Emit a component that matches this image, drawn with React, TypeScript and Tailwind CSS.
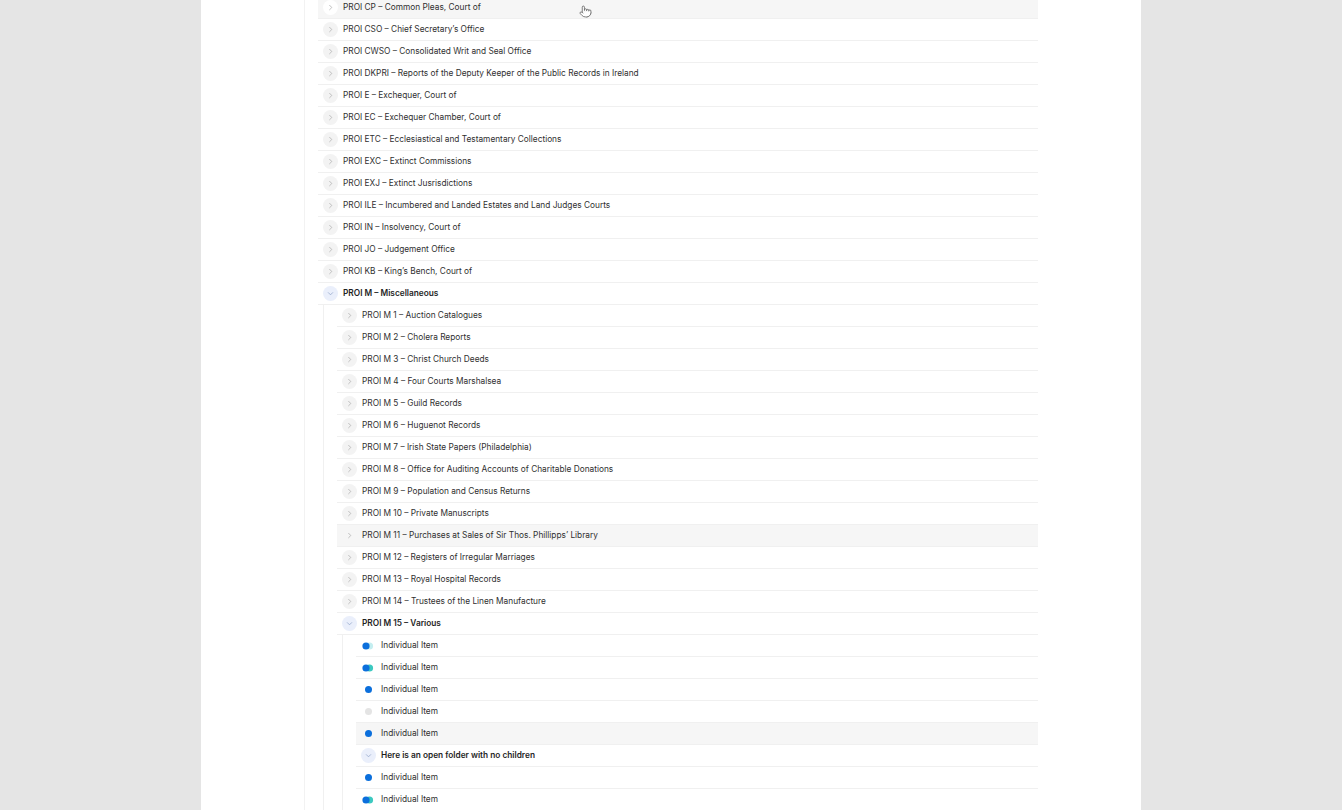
import { Pointer } from 'lucide-react';

type Icon = 'closed' | 'open' | 'dual-light' | 'dual' | 'blue' | 'gray';

type Node = {
  label: string;
  icon: Icon;
  hover?: 'white' | 'none';
  children?: Node[];
};

const item = (icon: Icon, hover?: 'white' | 'none'): Node => ({ label: 'Individual Item', icon, hover });

const tree: Node[] = [
  { label: 'PROI CP – Common Pleas, Court of', icon: 'closed', hover: 'white' },
  { label: 'PROI CSO – Chief Secretary’s Office', icon: 'closed' },
  { label: 'PROI CWSO – Consolidated Writ and Seal Office', icon: 'closed' },
  { label: 'PROI DKPRI – Reports of the Deputy Keeper of the Public Records in Ireland', icon: 'closed' },
  { label: 'PROI E – Exchequer, Court of', icon: 'closed' },
  { label: 'PROI EC – Exchequer Chamber, Court of', icon: 'closed' },
  { label: 'PROI ETC – Ecclesiastical and Testamentary Collections', icon: 'closed' },
  { label: 'PROI EXC – Extinct Commissions', icon: 'closed' },
  { label: 'PROI EXJ – Extinct Jusrisdictions', icon: 'closed' },
  { label: 'PROI ILE – Incumbered and Landed Estates and Land Judges Courts', icon: 'closed' },
  { label: 'PROI IN – Insolvency, Court of', icon: 'closed' },
  { label: 'PROI JO – Judgement Office', icon: 'closed' },
  { label: 'PROI KB – King’s Bench, Court of', icon: 'closed' },
  {
    label: 'PROI M – Miscellaneous',
    icon: 'open',
    children: [
      { label: 'PROI M 1 – Auction Catalogues', icon: 'closed' },
      { label: 'PROI M 2 – Cholera Reports', icon: 'closed' },
      { label: 'PROI M 3 – Christ Church Deeds', icon: 'closed' },
      { label: 'PROI M 4 – Four Courts Marshalsea', icon: 'closed' },
      { label: 'PROI M 5 – Guild Records', icon: 'closed' },
      { label: 'PROI M 6 – Huguenot Records', icon: 'closed' },
      { label: 'PROI M 7 – Irish State Papers (Philadelphia)', icon: 'closed' },
      { label: 'PROI M 8 – Office for Auditing Accounts of Charitable Donations', icon: 'closed' },
      { label: 'PROI M 9 – Population and Census Returns', icon: 'closed' },
      { label: 'PROI M 10 – Private Manuscripts', icon: 'closed' },
      { label: 'PROI M 11 – Purchases at Sales of Sir Thos. Phillipps’ Library', icon: 'closed', hover: 'none' },
      { label: 'PROI M 12 – Registers of Irregular Marriages', icon: 'closed' },
      { label: 'PROI M 13 – Royal Hospital Records', icon: 'closed' },
      { label: 'PROI M 14 – Trustees of the Linen Manufacture', icon: 'closed' },
      {
        label: 'PROI M 15 – Various',
        icon: 'open',
        children: [
          item('dual-light'),
          item('dual'),
          item('blue'),
          item('gray'),
          item('blue', 'none'),
          { label: 'Here is an open folder with no children', icon: 'open', children: [] },
          item('blue'),
          item('dual'),
        ],
      },
    ],
  },
];

function RowIcon({ icon, hover }: { icon: Icon; hover?: 'white' | 'none' }) {
  if (icon === 'closed') {
    const bg = hover === 'white' ? 'bg-white' : hover === 'none' ? 'bg-transparent' : 'bg-[#f3f3f3]';
    return (
      <span className={`flex h-[15px] w-[15px] shrink-0 items-center justify-center rounded-full ${bg}`}>
        <svg width="7" height="7" viewBox="0 0 8 8" fill="none">
          <path d="M3 1.5 5.5 4 3 6.5" stroke="#b0b0b0" strokeWidth="0.9" strokeLinecap="round" strokeLinejoin="round" />
        </svg>
      </span>
    );
  }
  if (icon === 'open') {
    return (
      <span className="flex h-[15px] w-[15px] shrink-0 items-center justify-center rounded-full bg-[#eaeffb]">
        <svg width="7" height="7" viewBox="0 0 8 8" fill="none">
          <path d="M1.5 3 4 5.5 6.5 3" stroke="#94a7cb" strokeWidth="0.9" strokeLinecap="round" strokeLinejoin="round" />
        </svg>
      </span>
    );
  }
  if (icon === 'dual-light' || icon === 'dual') {
    const second = icon === 'dual' ? '#3cc9c0' : '#c4eef0';
    return (
      <span className="flex h-[15px] w-[15px] shrink-0 items-center">
        <svg width="14" height="8" viewBox="0 0 14 8">
          <circle cx="8.5" cy="4" r="3.6" fill={second} />
          <circle cx="5" cy="4" r="3.6" fill="#0b6fdc" />
        </svg>
      </span>
    );
  }
  return (
    <span className="flex h-[15px] w-[15px] shrink-0 items-center justify-center">
      <span className={`h-[7px] w-[7px] rounded-full ${icon === 'blue' ? 'bg-[#0b6fdc]' : 'bg-[#e4e4e4]'}`} />
    </span>
  );
}

function TreeRow({ node }: { node: Node }) {
  const bold = node.icon === 'open';
  return (
    <div>
      <div
        className={`flex h-[22px] items-center gap-[5px] border-b border-[#f0f0f0] pl-[5px] ${node.hover ? 'bg-[#f6f6f6]' : ''}`}
      >
        <RowIcon icon={node.icon} hover={node.hover} />
        <span className={`whitespace-nowrap text-[8.3px] ${bold ? 'font-semibold text-[#1f1f1f]' : 'text-[#2f2f2f]'}`}>
          {node.label}
        </span>
      </div>
      {node.children && node.children.length > 0 && (
        <div className="ml-[5px] border-l border-[#f0f0f0] pl-[13px]">
          {node.children.map((c, i) => (
            <TreeRow key={i} node={c} />
          ))}
        </div>
      )}
    </div>
  );
}

export default function App() {
  return (
    <div className="flex h-[810px] w-full overflow-hidden bg-[#e5e5e5] font-['Inter',sans-serif]">
      <div className="relative ml-[201px] h-full w-[940px] overflow-hidden bg-white">
        <div className="-mt-[3px] ml-[103px] w-[734px] border-l border-[#f2f2f2] pl-[13px]">
          {tree.map((n, i) => (
            <TreeRow key={i} node={n} />
          ))}
        </div>
        <Pointer className="absolute left-[378px] top-[5px]" size={13} strokeWidth={1.4} color="#555" fill="#fff" />
      </div>
    </div>
  );
}
